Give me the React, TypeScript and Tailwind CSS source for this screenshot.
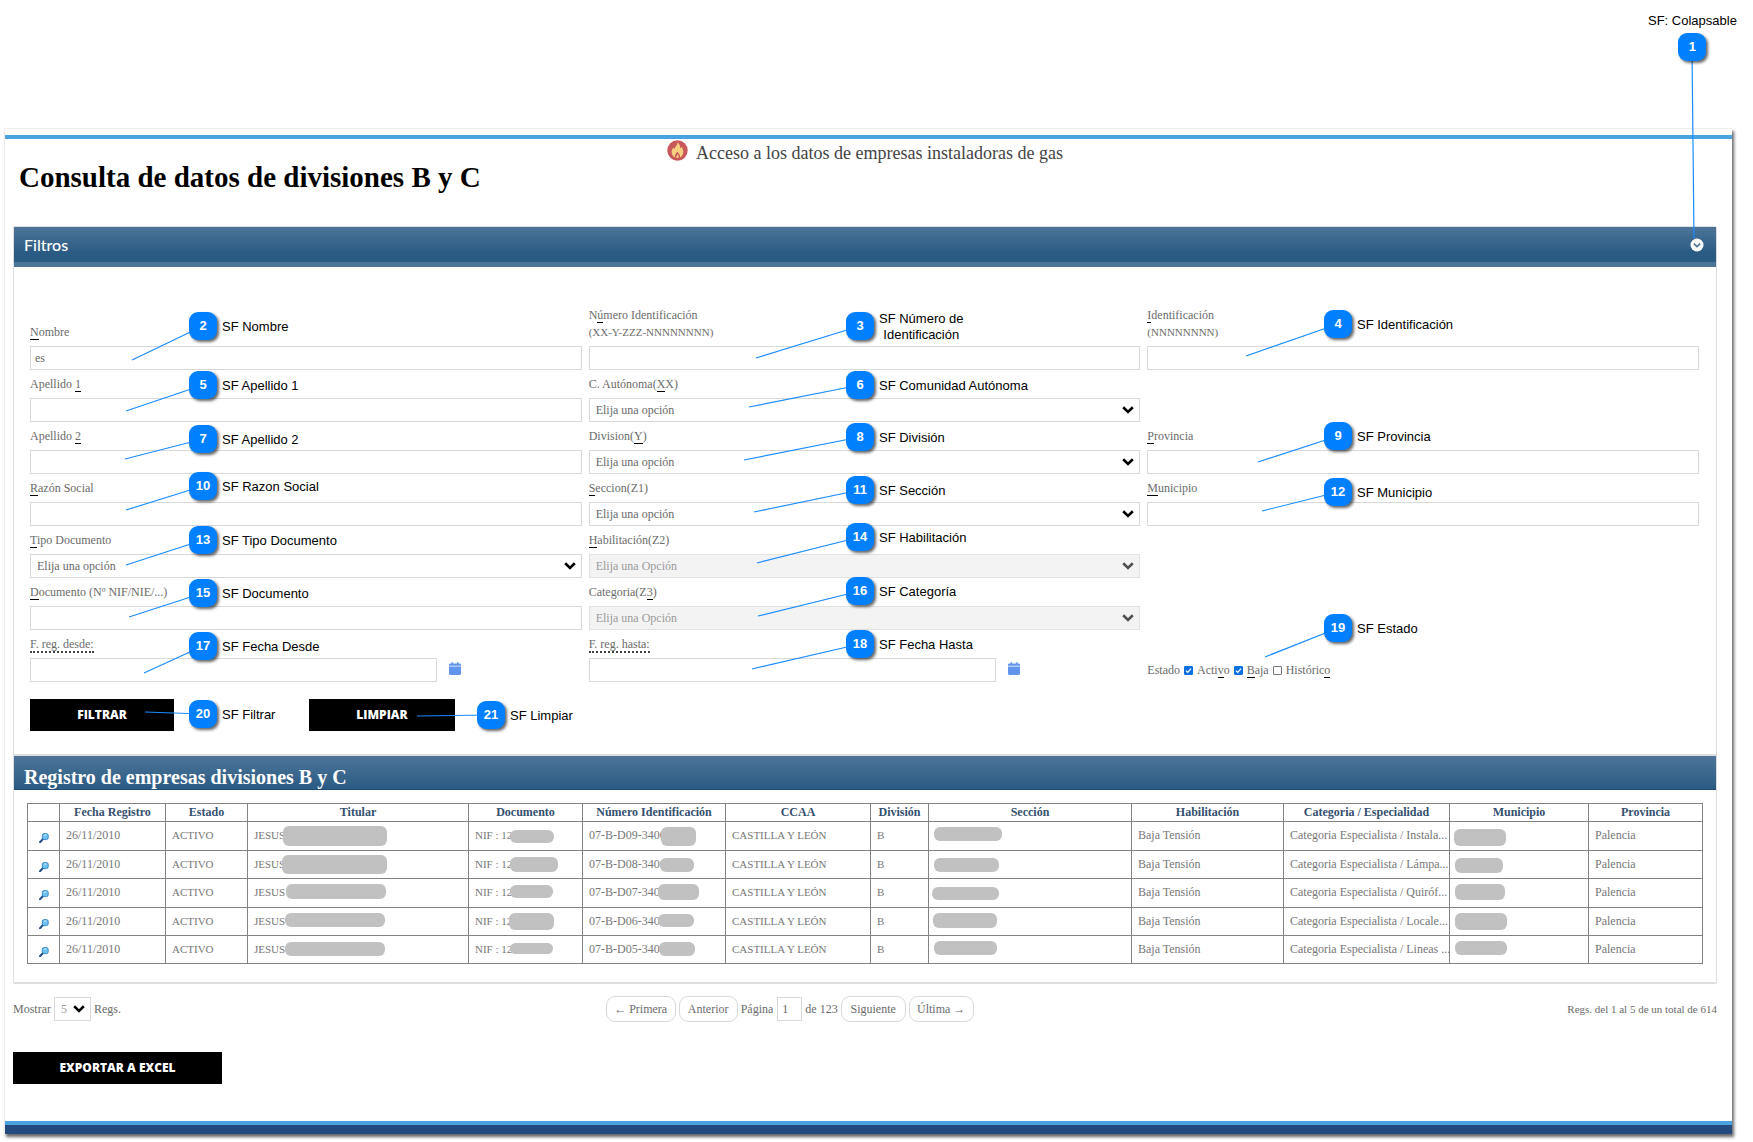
import React from "react";

const serif = "font-['Liberation_Serif',serif]";

/* ---------- Icons ---------- */

function FlameIcon() {
  return (
    <svg className="h-[21px] w-[21px]" viewBox="0 0 21 21" aria-hidden="true">
      <circle cx="10.5" cy="10.5" r="10.2" fill="#c8585a" />
      <path
        d="M10.300 2.200c2.300 1.600 3 3.700 2.900 6 .6-.3 1-.8 1.200-1.500 1.300 1.600 1.900 3.300 1.900 5 0 2.700-1.400 4.900-3.700 6.100.6-1.600.1-3-1.100-4.300-.4-.5-.7-1.100-.7-1.800-2.200 1.500-3.200 3.800-2.300 6.100-2.300-1-3.900-3.200-3.900-5.800 0-2 .8-3.300 1.900-4.600.1.900.4 1.400.9 1.800C7.400 6.900 10.800 5.500 10.300 2.200z"
        fill="#f6d07e"
      />
      <path d="M8.500 17.800c-.9-2.300.1-4.600 2.300-6.100 0 .7.3 1.300.7 1.800 1.200 1.300 1.700 2.700 1.100 4.300z" fill="#c8585a" />
      <path d="M10.700 14.200c.9 1 1.300 2.500.4 3.700H9.700c-.6-1.300 0-2.700 1-3.700z" fill="#f6d07e" />
    </svg>
  );
}

function CollapseIcon() {
  return (
    <svg className="h-[14px] w-[14px]" viewBox="0 0 14 14" aria-hidden="true">
      <circle cx="7" cy="7" r="6.500" fill="#fff" />
      <path d="M3.800 5.600 7 8.600l3.200-3" fill="none" stroke="#54749a" strokeWidth="1.700" />
    </svg>
  );
}

function ArrowDown({ muted }: { muted?: boolean }) {
  return (
    <svg
      className="pointer-events-none absolute top-1/2 right-[6px] h-[8px] w-[12px] -translate-y-1/2"
      viewBox="0 0 12 8"
      aria-hidden="true"
    >
      <path
        d="M1.200 1.300 6 6l4.800-4.700"
        fill="none"
        stroke={muted ? "#505050" : "#000"}
        strokeWidth="2.600"
      />
    </svg>
  );
}

function CalendarIcon() {
  return (
    <svg className="h-[13px] w-[12px]" viewBox="0 0 12 13" aria-hidden="true">
      <path
        d="M1.300 1.500H2.500V.2h1.600v1.300h3.800V.2h1.600v1.300h1.200c.7 0 1.300.5 1.300 1.200v1.100H0V2.700c0-.7.6-1.200 1.300-1.200zM0 4.400h12v7.400c0 .7-.6 1.200-1.300 1.200H1.300C.6 13 0 12.500 0 11.800z"
        fill="#6495ed"
      />
    </svg>
  );
}

function LensIcon() {
  return (
    <svg className="h-[10px] w-[10px]" viewBox="0 0 10 10" aria-hidden="true">
      <path d="M1 9.200 4.200 5.800" stroke="#24508c" strokeWidth="2" strokeLinecap="round" />
      <rect x="3.300" y=".6" width="5.900" height="6" rx="1.800" fill="#6cc3f2" stroke="#2f7fbf" strokeWidth=".9" />
      <path d="M5 2.600c.6-.7 1.600-.9 2.500-.5" stroke="#d8f1fd" strokeWidth="1" fill="none" />
    </svg>
  );
}

/* ---------- Form pieces ---------- */

const U = ({ children }: { children: React.ReactNode }) => (
  <span className="border-b border-black">{children}</span>
);

const Pattern = ({ children }: { children: React.ReactNode }) => (
  <span className="block text-[11px]">{children}</span>
);

type FieldProps = { id: string; label: React.ReactNode; children: React.ReactNode };

function Field({ id, label, children }: FieldProps) {
  return (
    <div className="flex flex-col items-stretch justify-end">
      <label htmlFor={id} className="mb-[5px] block text-[12px] leading-[17px] text-[#6b6b6b]">
        {label}
      </label>
      {children}
    </div>
  );
}

const Dotted = ({ children }: { children: React.ReactNode }) => (
  <span className="border-b-2 border-dotted border-[#444]">{children}</span>
);

const box = "h-6 w-full border border-[#d9d9d9] bg-white px-[4px] text-[12px] text-[#6b6b6b] outline-none";

function TextBox({ id, value }: { id: string; value?: string }) {
  return <input id={id} type="text" defaultValue={value} className={box} />;
}

function Choice({ id, text, disabled }: { id: string; text: string; disabled?: boolean }) {
  return (
    <div className="relative">
      <select
        id={id}
        disabled={disabled}
        className="block h-6 w-full appearance-none border border-[#d9d9d9] bg-white px-[6px] text-[12px] text-[#6b6b6b] outline-none disabled:border-[#e2e2e2] disabled:bg-[#f3f3f3] disabled:text-[#9b9b9b] disabled:opacity-100"
      >
        <option>{text}</option>
      </select>
      <ArrowDown muted={disabled} />
    </div>
  );
}

function DateBox({ id }: { id: string }) {
  return (
    <div className="flex items-center gap-3">
      <input id={id} type="text" className={box + " max-w-[407px]"} />
      <button type="button" aria-label="Abrir calendario" className="-mt-1">
        <CalendarIcon />
      </button>
    </div>
  );
}

function Check({ id, checked, label }: { id: string; checked?: boolean; label: React.ReactNode }) {
  return (
    <span className="flex items-center gap-1">
      <span className="relative flex">
        <input
          id={id}
          type="checkbox"
          defaultChecked={checked}
          className="peer h-[9px] w-[9px] appearance-none rounded-[1px] border border-[#777] bg-white checked:border-[#0b6fe0] checked:bg-[#0b6fe0]"
        />
        <svg
          className="pointer-events-none absolute inset-0 hidden h-[9px] w-[9px] peer-checked:block"
          viewBox="0 0 9 9"
          aria-hidden="true"
        >
          <path d="M2 4.700 3.800 6.400 7 2.600" fill="none" stroke="#fff" strokeWidth="1.300" />
        </svg>
      </span>
      <label htmlFor={id} className="leading-[14px]">
        {label}
      </label>
    </span>
  );
}

const blackButton =
  "h-8 bg-black text-center font-['Open_Sans',sans-serif] text-[12px] font-extrabold text-white";

/* ---------- Results table ---------- */

/* A grey mask over private data: left, top, width, height inside its cell. */
type Mask = [number, number, number, number];

type Row = { num: string; cat: string; h: string; masks: [Mask, Mask, Mask, Mask, Mask] };

const rows: Row[] = [
  {
    num: "07-B-D09-3400",
    cat: "Categoria Especialista / Instala...",
    h: "h-[29px]",
    masks: [[35, 4, 104, 20], [41, 8, 44, 13], [78, 5, 35, 19], [5, 5, 68, 14], [4, 7, 52, 17]],
  },
  {
    num: "07-B-D08-3400",
    cat: "Categoria Especialista / Lámpa...",
    h: "h-[28px]",
    masks: [[34, 4, 105, 19], [41, 6, 48, 15], [77, 7, 34, 14], [5, 7, 65, 14], [5, 7, 48, 15]],
  },
  {
    num: "07-B-D07-3400",
    cat: "Categoria Especialista / Quiróf...",
    h: "h-[29px]",
    masks: [[38, 5, 100, 15], [41, 6, 43, 13], [75, 5, 41, 16], [3, 8, 67, 13], [5, 5, 50, 16]],
  },
  {
    num: "07-B-D06-3400",
    cat: "Categoria Especialista / Locale...",
    h: "h-[28px]",
    masks: [[37, 5, 100, 14], [40, 5, 45, 17], [75, 6, 36, 13], [4, 5, 64, 15], [5, 5, 52, 17]],
  },
  {
    num: "07-B-D05-3400",
    cat: "Categoria Especialista / Lineas ...",
    h: "h-[28px]",
    masks: [[37, 6, 100, 14], [41, 7, 43, 11], [76, 6, 36, 14], [5, 5, 63, 14], [5, 5, 52, 14]],
  },
];

const edge = "border border-[#828282]";
const cell = edge + " px-[6px] pt-0 pb-[2px] whitespace-nowrap text-[12px]";
const capsCell = edge + " px-[6px] pt-0 pb-[2px] whitespace-nowrap text-[11px]";

function Masked({
  at: [left, top, width, height],
  style,
  children,
}: {
  at: Mask;
  style: string;
  children?: React.ReactNode;
}) {
  return (
    <td className={style + " relative"}>
      {children}
      <span className="absolute rounded-[6px] bg-[#c1c1c1]" style={{ left, top, width, height }} />
    </td>
  );
}

const columns: [string, string][] = [
  ["", "w-[32px]"],
  ["Fecha Registro", "w-[106px]"],
  ["Estado", "w-[82px]"],
  ["Titular", "w-[221px]"],
  ["Documento", "w-[114px]"],
  ["Número Identificación", "w-[143px]"],
  ["CCAA", "w-[145px]"],
  ["División", "w-[58px]"],
  ["Sección", "w-[203px]"],
  ["Habilitación", "w-[152px]"],
  ["Categoria / Especialidad", "w-[166px]"],
  ["Municipio", "w-[139px]"],
  ["Provincia", "w-[114px]"],
];

function Results() {
  return (
    <table className="w-full table-fixed border-collapse leading-[16px] text-[#777]">
      <thead>
        <tr className="h-[18px]">
          {columns.map(([name, width]) => (
            <th
              key={name}
              scope="col"
              className={`${width} ${edge} px-0 pt-0 pb-px text-[12px] font-bold whitespace-nowrap text-[#34506f]`}
            >
              {name}
            </th>
          ))}
        </tr>
      </thead>
      <tbody>
        {rows.map((r) => (
          <tr key={r.num} className={r.h}>
            <td className={edge + " pt-1"}>
              <button type="button" aria-label="Ver detalle" className="mx-auto flex">
                <LensIcon />
              </button>
            </td>
            <td className={cell}>26/11/2010</td>
            <td className={capsCell}>ACTIVO</td>
            <Masked at={r.masks[0]} style={capsCell}>JESUS</Masked>
            <Masked at={r.masks[1]} style={capsCell}>NIF : 12</Masked>
            <Masked at={r.masks[2]} style={cell}>{r.num}</Masked>
            <td className={capsCell}>CASTILLA Y LEÓN</td>
            <td className={capsCell}>B</td>
            <Masked at={r.masks[3]} style={cell} />
            <td className={cell}>Baja Tensión</td>
            <td className={cell}>{r.cat}</td>
            <Masked at={r.masks[4]} style={cell} />
            <td className={cell}>Palencia</td>
          </tr>
        ))}
      </tbody>
    </table>
  );
}

/* ---------- Numbered callouts ---------- */

/* number, text, badge left, badge top, pointer tip x, pointer tip y */
type Callout = [number, string, number, number, number, number];

const callouts: Callout[] = [
  [2, "SF Nombre", 189, 312, 132, 360],
  [5, "SF Apellido 1", 189, 371, 126, 411],
  [7, "SF Apellido 2", 189, 425, 125, 459],
  [10, "SF Razon Social", 189, 472, 126, 510],
  [13, "SF Tipo Documento", 189, 526, 126, 565],
  [15, "SF Documento", 189, 579, 129, 617],
  [17, "SF Fecha Desde", 189, 632, 144, 673],
  [20, "SF Filtrar", 189, 700, 145, 712],
  [21, "SF Limpiar", 477, 701, 417, 716],
  [3, "SF Número de\nIdentificación", 846, 312, 756, 358],
  [6, "SF Comunidad Autónoma", 846, 371, 749, 407],
  [8, "SF División", 846, 423, 744, 460],
  [11, "SF Sección", 846, 476, 754, 512],
  [14, "SF Habilitación", 846, 523, 757, 563],
  [16, "SF Categoría", 846, 577, 758, 616],
  [18, "SF Fecha Hasta", 846, 630, 752, 669],
  [4, "SF Identificación", 1324, 310, 1246, 356],
  [9, "SF Provincia", 1324, 422, 1258, 462],
  [12, "SF Municipio", 1324, 478, 1262, 511],
  [19, "SF Estado", 1324, 614, 1265, 657],
];

const badge =
  "flex h-7 w-7 shrink-0 items-center justify-center rounded-[9px] bg-[#0080ff] text-[13px] font-bold text-white shadow-[2px_2px_3px_rgba(0,0,0,0.6)]";

function Callouts() {
  return (
    <div className="pointer-events-none absolute inset-0 font-['Liberation_Sans',sans-serif] text-[13px] leading-[16px] text-black">
      <svg className="absolute inset-0 h-full w-full" aria-hidden="true">
        {callouts.map(([n, , x, y, tx, ty]) => (
          <line key={n} x1={x + 14} y1={y + 14} x2={tx} y2={ty} stroke="#1a8cff" strokeWidth="1.200" />
        ))}
        <line x1="1692" y1="50" x2="1694" y2="238" stroke="#1a8cff" strokeWidth="1.200" />
      </svg>
      {callouts.map(([n, text, left, top]) => (
        <div key={n} className="absolute flex h-7 items-center gap-[5px]" style={{ left, top }}>
          <span className={badge}>{n}</span>
          <span className="pt-[2px] text-center whitespace-pre">{text}</span>
        </div>
      ))}
      <div className="absolute top-3 left-[1648px] flex flex-col items-center gap-1">
        <span className="pt-px whitespace-nowrap">SF: Colapsable</span>
        <span className={badge}>1</span>
      </div>
    </div>
  );
}

/* ---------- Page ---------- */

const pager = "h-[26px] rounded-[9px] border border-[#d9d9d9] bg-white";

export default function App() {
  return (
    <div className={`${serif} relative bg-white pt-32 pr-[21px] pb-[9px] pl-1 text-[12px] text-[#6b6b6b]`}>
      <div className="border-t border-l border-[#ececec] bg-white pt-[6px] shadow-[2px_3px_3px_rgba(0,0,0,0.6)]">
        <div className="h-1 bg-[#48a3e0]" />

        <main className="pr-[15px] pl-2">
          <header>
            <div className="flex h-[22px] items-center justify-center gap-2 text-[#444]">
              <FlameIcon />
              <a href="#gas" className="mt-1.5 text-[18px] leading-[22px]">
                Acceso a los datos de empresas instaladoras de gas
              </a>
            </div>
            <h1 className="pl-[6px] text-[29px] leading-[32px] font-bold text-black">
              Consulta de datos de divisiones B y C
            </h1>
          </header>

          <section className="mt-[33px] rounded-t-[2px] border border-b-2 border-[#dedede]">
            <div className="flex h-10 items-center justify-between border-b-[5px] border-[#4b7499] bg-linear-to-b from-[#4d7599] to-[#2a5b83] to-75% pr-[12px] pl-[10px]">
              <h2 className="pt-px font-['Lato',sans-serif] text-[16px] leading-[20px] font-medium text-white">
                Filtros
              </h2>
              <button type="button" aria-label="Colapsar filtros">
                <CollapseIcon />
              </button>
            </div>

            <form className="pt-10 pr-[17px] pb-[23px] pl-4" onSubmit={(e) => e.preventDefault()}>
              <div className="grid grid-cols-3 gap-x-[7px] gap-y-[6px]">
                <Field id="nombre" label={<><U>N</U>ombre</>}><TextBox id="nombre" value="es" /></Field>
                <Field id="numero" label={<>N<U>ú</U>mero Identificación<Pattern>(XX-Y-ZZZ-NNNNNNNN)</Pattern></>}>
                  <TextBox id="numero" />
                </Field>
                <Field id="ident" label={<><U>I</U>dentificación<Pattern>(NNNNNNNN)</Pattern></>}>
                  <TextBox id="ident" />
                </Field>

                <Field id="ap1" label={<>Apellido <U>1</U></>}><TextBox id="ap1" /></Field>
                <Field id="ccaa" label={<>C. Autónoma(<U>X</U>X)</>}><Choice id="ccaa" text="Elija una opción" /></Field>
                <div />

                <Field id="ap2" label={<>Apellido <U>2</U></>}><TextBox id="ap2" /></Field>
                <Field id="div" label={<>Division(<U>Y</U>)</>}><Choice id="div" text="Elija una opción" /></Field>
                <Field id="prov" label={<><U>P</U>rovincia</>}><TextBox id="prov" /></Field>

                <Field id="razon" label={<><U>R</U>azón Social</>}><TextBox id="razon" /></Field>
                <Field id="secc" label={<><U>S</U>eccion(Z1)</>}><Choice id="secc" text="Elija una opción" /></Field>
                <Field id="muni" label={<><U>M</U>unicipio</>}><TextBox id="muni" /></Field>

                <Field id="tipo" label={<><U>T</U>ipo Documento</>}><Choice id="tipo" text="Elija una opción" /></Field>
                <Field id="habil" label={<><U>H</U>abilitación(Z2)</>}>
                  <Choice id="habil" text="Elija una Opción" disabled />
                </Field>
                <div />

                <Field id="doc" label={<><U>D</U>ocumento (Nº NIF/NIE/...)</>}><TextBox id="doc" /></Field>
                <Field id="cat" label={<>Categoria(Z<U>3</U>)</>}>
                  <Choice id="cat" text="Elija una Opción" disabled />
                </Field>
                <div />

                <Field id="desde" label={<Dotted>F. reg. desde:</Dotted>}><DateBox id="desde" /></Field>
                <Field id="hasta" label={<Dotted>F. reg. hasta:</Dotted>}><DateBox id="hasta" /></Field>
                <div className="flex h-6 items-center gap-1 self-end">
                  <span>Estado</span>
                  <Check id="activo" checked label={<>Acti<U>v</U>o</>} />
                  <Check id="baja" checked label={<><U>B</U>aja</>} />
                  <Check id="hist" label={<>Históric<U>o</U></>} />
                </div>
              </div>

              <div className="mt-[17px] flex gap-[135px]">
                <button type="submit" className={blackButton + " w-36"}>FILTRAR</button>
                <button type="reset" className={blackButton + " w-[146px]"}>LIMPIAR</button>
              </div>
            </form>
          </section>

          <section className="rounded-b-[2px] border border-t-0 border-b-2 border-[#dedede]">
            <h2 className="flex h-[34px] items-end border-b border-[#1f4d75] bg-linear-to-b from-[#4d7599] to-[#2a5b83] pl-[10px] text-[20px] leading-[24px] font-bold text-white">
              Registro de empresas divisiones B y C
            </h2>
            <div className="pt-[13px] pr-[13px] pb-[18px] pl-[13px]">
              <Results />
            </div>
          </section>

          <nav className="mt-3 grid h-[26px] grid-cols-[8fr_15fr] items-center" aria-label="Paginación">
            <div className="flex items-center gap-[3px]">
              <label htmlFor="regs">Mostrar</label>
              <span className="relative">
                <select
                  id="regs"
                  className="block h-6 w-[37px] appearance-none border border-[#d9d9d9] bg-white pl-[6px] text-[12px] text-[#999] outline-none"
                >
                  <option>5</option>
                </select>
                <ArrowDown />
              </span>
              <span>Regs.</span>
            </div>
            <div className="flex items-center justify-between">
              <div className="flex items-center gap-[3px] whitespace-nowrap">
                <button type="button" className={pager + " w-[70px]"}>← Primera</button>
                <button type="button" className={pager + " w-[59px]"}>Anterior</button>
                <label htmlFor="pagina">Página</label>
                <input
                  id="pagina"
                  type="text"
                  defaultValue="1"
                  className="ml-px h-6 w-[25px] border border-[#d9d9d9] px-[4px] outline-none"
                />
                <span>de 123</span>
                <button type="button" className={pager + " w-[65px]"}>Siguiente</button>
                <button type="button" className={pager + " w-[65px]"}>Última →</button>
              </div>
              <p className="text-right text-[11px]">Regs. del 1 al 5 de un total de 614</p>
            </div>
          </nav>

          <button type="button" className={blackButton + " mt-[30px] mb-[37px] block w-[209px]"}>
            EXPORTAR A EXCEL
          </button>
        </main>

        <footer className="h-[13px] border-t-4 border-[#48a3e0] bg-[#234b80]" />
      </div>
      <Callouts />
    </div>
  );
}
